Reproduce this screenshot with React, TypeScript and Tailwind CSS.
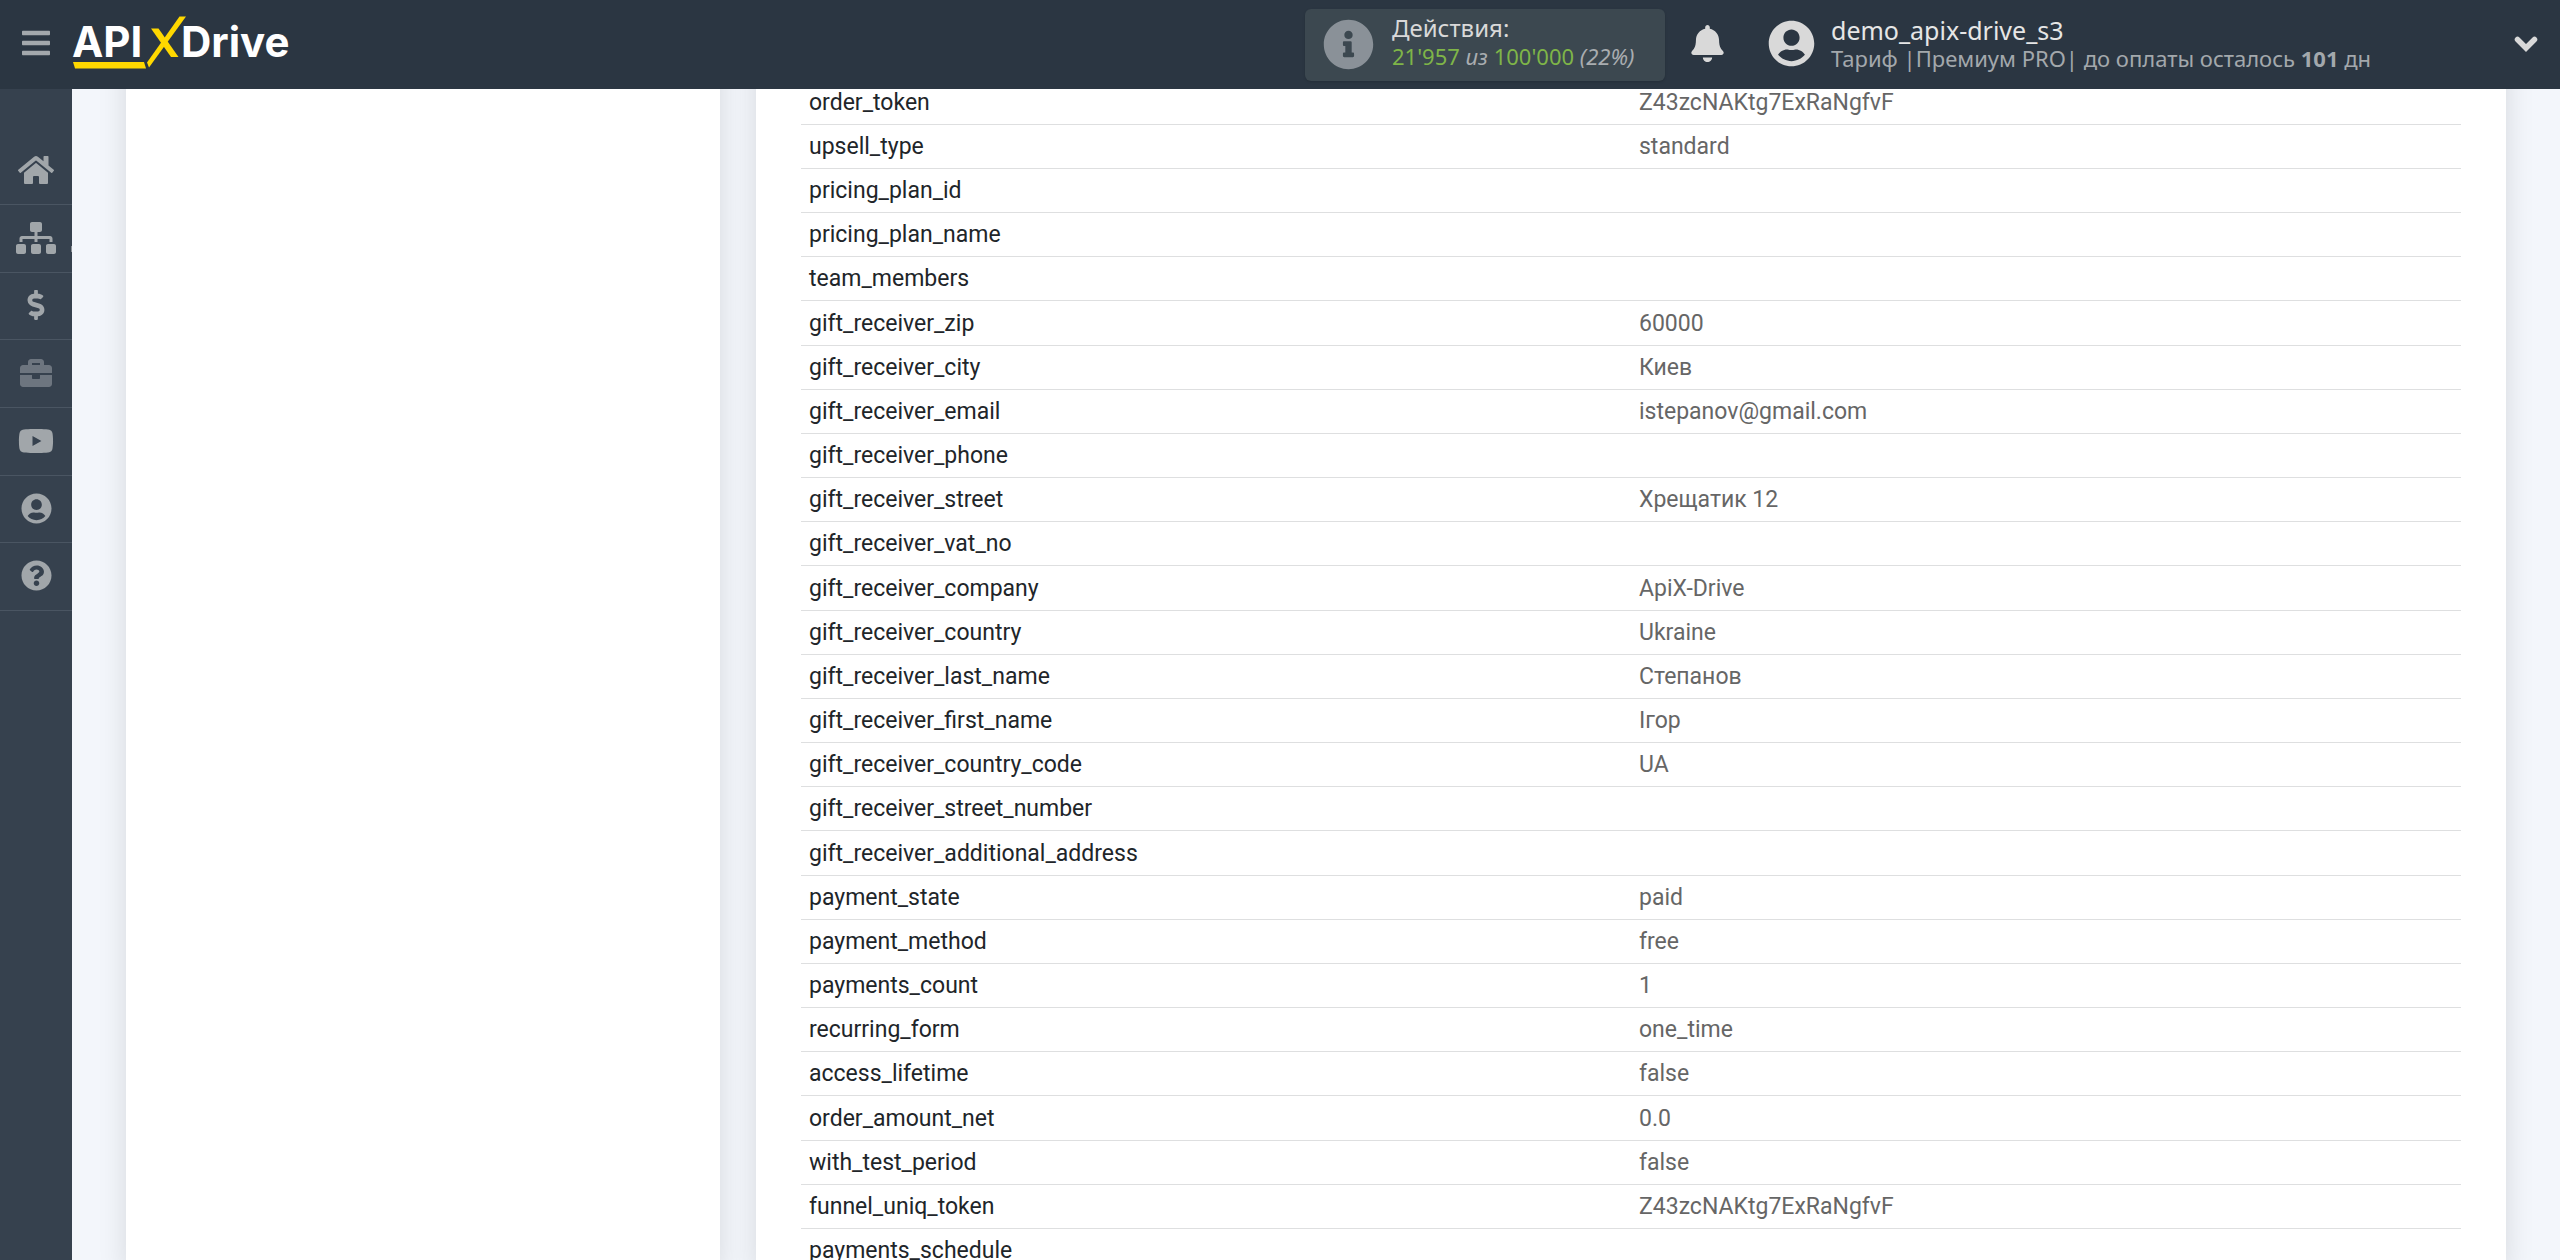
import type { IconType } from "react-icons";
import {
  FaBars,
  FaBell,
  FaBriefcase,
  FaDollarSign,
  FaHome,
  FaInfoCircle,
  FaQuestionCircle,
  FaSitemap,
  FaUserCircle,
  FaYoutube,
} from "react-icons/fa";

type NavItem = {
  label: string;
  icon: IconType;
  size: number;
  muted?: boolean;
  submenu?: boolean;
};

const navItems: NavItem[] = [
  { label: "Главная", icon: FaHome, size: 36 },
  { label: "Связи", icon: FaSitemap, size: 40, submenu: true },
  { label: "Оплата", icon: FaDollarSign, size: 30 },
  { label: "Проекты", icon: FaBriefcase, size: 32, muted: true },
  { label: "Видео", icon: FaYoutube, size: 36 },
  { label: "Профиль", icon: FaUserCircle, size: 31 },
  { label: "Помощь", icon: FaQuestionCircle, size: 31 },
];

const fields: [string, string][] = [
  ["order_token", "Z43zcNAKtg7ExRaNgfvF"],
  ["upsell_type", "standard"],
  ["pricing_plan_id", ""],
  ["pricing_plan_name", ""],
  ["team_members", ""],
  ["gift_receiver_zip", "60000"],
  ["gift_receiver_city", "Киев"],
  ["gift_receiver_email", "istepanov@gmail.com"],
  ["gift_receiver_phone", ""],
  ["gift_receiver_street", "Хрещатик 12"],
  ["gift_receiver_vat_no", ""],
  ["gift_receiver_company", "ApiX-Drive"],
  ["gift_receiver_country", "Ukraine"],
  ["gift_receiver_last_name", "Степанов"],
  ["gift_receiver_first_name", "Ігор"],
  ["gift_receiver_country_code", "UA"],
  ["gift_receiver_street_number", ""],
  ["gift_receiver_additional_address", ""],
  ["payment_state", "paid"],
  ["payment_method", "free"],
  ["payments_count", "1"],
  ["recurring_form", "one_time"],
  ["access_lifetime", "false"],
  ["order_amount_net", "0.0"],
  ["with_test_period", "false"],
  ["funnel_uniq_token", "Z43zcNAKtg7ExRaNgfvF"],
  ["payments_schedule", ""],
];

function Logo() {
  return (
    <svg width="224" height="60" viewBox="0 0 224 60" role="img" aria-label="APIXDrive">
      <g fill="#ffffff" fontFamily="Inter, sans-serif" fontWeight="700" fontSize="42">
        <text x="0" y="44">API</text>
        <text x="109" y="44">Drive</text>
      </g>
      <g fill="#ffd800">
        <path d="M1 49h71l2 6.500H3z" />
        <path d="M75 49.500L107.500 3.500h6.500L77 54.500z" />
        <path d="M79 15.500h7.500L106.500 44h-7.500z" />
      </g>
    </svg>
  );
}

function Chevron() {
  return (
    <svg width="24" height="16" viewBox="0 0 24 16" aria-hidden="true">
      <path
        d="M3.500 3.500L12 12l8.500-8.500"
        fill="none"
        stroke="currentColor"
        strokeWidth="5.500"
        strokeLinecap="round"
      />
    </svg>
  );
}

function Header() {
  return (
    <header className="fixed inset-x-0 top-0 z-10 flex h-[89px] items-center bg-[#2b3642] font-['Noto_Sans',sans-serif]">
      <div className="flex w-1/2 items-center pb-1">
        <button aria-label="Меню" className="flex w-[72px] justify-center text-[#a3a8ac]">
          <FaBars size={32} />
        </button>
        <a href="#home">
          <Logo />
        </a>
      </div>
      <div className="flex w-1/2 items-center pr-[22px] pl-[25px]">
        <div className="flex h-[72px] w-[360px] items-center gap-[18px] rounded-md bg-[#3c4850] pl-[18px] shadow">
          <FaInfoCircle size={51} className="text-[#8a9198]" />
          <div className="pb-1.5 leading-[29px]">
            <p className="text-2xl leading-[29px] text-[#d9d9d9]">Действия:</p>
            <p className="text-[22px] text-[#7fb548]">
              21'957 <i className="text-[#a9adb0]">из</i> 100'000{" "}
              <i className="text-[#a9adb0]">(22%)</i>
            </p>
          </div>
        </div>
        <button aria-label="Уведомления" className="ml-6 pb-0.5 text-[#d9d9d9]">
          <FaBell size={37} />
        </button>
        <button className="ml-[42px] flex flex-1 items-center gap-4 pb-0.5 text-left">
          <FaUserCircle size={47} className="text-[#d9d9d9]" />
          <span className="flex flex-col">
            <span className="text-[25px] leading-7 text-[#e6e6e6]">demo_apix-drive_s3</span>
            <span className="text-[22px] leading-7 text-[#a3a8ac]">
              Тариф |Премиум PRO| до оплаты осталось <b>101</b> дн
            </span>
          </span>
          <span className="ml-auto text-[#d9d9d9]">
            <Chevron />
          </span>
        </button>
      </div>
    </header>
  );
}

function Sidebar() {
  return (
    <nav className="w-[72px] shrink-0 bg-[#36414e] pt-[137px]">
      <ul>
        {navItems.map(({ label, icon: Icon, size, muted, submenu }) => (
          <li key={label} className="h-[68px] border-b border-[#4a5562] nth-[3n]:h-[67px]">
            <a
              href="#nav"
              aria-label={label}
              className={`relative flex h-full items-center justify-center pb-0.5 ${muted ? "text-[#6d757f]" : "text-[#a1a6aa]"}`}
            >
              <Icon size={size} />
              {submenu && <span className="absolute right-0 bottom-5 h-1.5 w-px bg-[#8b9197]" />}
            </a>
          </li>
        ))}
      </ul>
    </nav>
  );
}

function FieldsTable() {
  return (
    <table className="w-full table-fixed text-left text-[23px] leading-8">
      <tbody>
        {fields.map(([name, value]) => (
          <tr key={name} className="h-11 border-b border-[#dedfe0] nth-[6n]:h-[45px]">
            <th scope="row" className="px-2 pt-0.5 font-normal text-[#212529]">
              {name}
            </th>
            <td className="px-2 pt-0.5 text-[#666666]">{value}</td>
          </tr>
        ))}
      </tbody>
    </table>
  );
}

export default function App() {
  return (
    <div className="flex h-screen overflow-hidden bg-[#f3f6fb] font-[Roboto,sans-serif]">
      <Header />
      <Sidebar />
      <main className="grid flex-1 grid-cols-[594fr_1750fr] gap-9 px-[54px]">
        <section className="bg-white shadow-[0_0_27px_rgba(0,0,0,0.12)]" />
        <section className="bg-white px-[45px] pt-20 shadow-[0_0_27px_rgba(0,0,0,0.12)]">
          <FieldsTable />
        </section>
      </main>
    </div>
  );
}
